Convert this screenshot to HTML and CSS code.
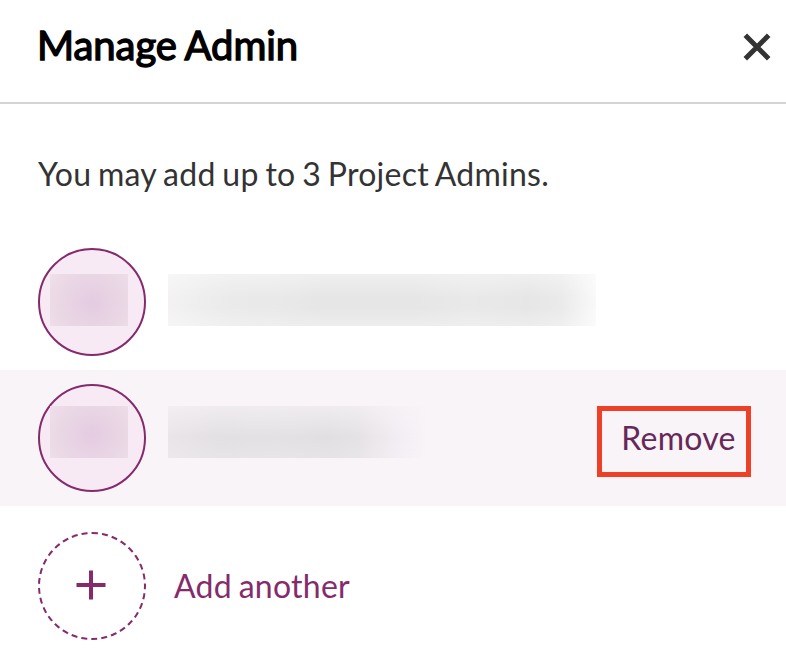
FILE: index.html
```html
<!DOCTYPE html>
<html lang="en">
<head>
<meta charset="utf-8">
<title>Manage Admin</title>
<link rel="stylesheet" href="styles.css">
</head>
<body>
<main class="dialog">
  <header class="header">
    <h1 class="title">Manage Admin</h1>
    <button class="close" aria-label="Close">
      <svg width="28" height="28" viewBox="0 0 28 28"><path d="M2.3 2.3 25.7 25.7M25.7 2.3 2.3 25.7"/></svg>
    </button>
  </header>
  <p class="intro">You may add up to 3 Project Admins.</p>
  <ul class="list">
    <li class="row">
      <span class="avatar"><span class="initials"></span></span>
      <span class="name name-long"></span>
    </li>
    <li class="row row-active">
      <span class="avatar"><span class="initials initials-high"></span></span>
      <span class="name name-short"></span>
      <button class="remove">Remove</button>
    </li>
    <li class="row row-add">
      <span class="avatar avatar-add">
        <svg width="30" height="30" viewBox="0 0 30 30"><path d="M.5 15h29M15 .5v29"/></svg>
      </span>
      <button class="add">Add another</button>
    </li>
  </ul>
</main>
</body>
</html>
```

FILE: styles.css
```css
* { box-sizing: border-box; }
body {
  margin: 0;
  background: #fff;
  color: #333;
  font: 32px/40px Lato, sans-serif;
  letter-spacing: .26px;
  word-spacing: -1.7px;
}
button {
  padding: 0;
  border: 0;
  background: none;
  font: inherit;
  letter-spacing: inherit;
  word-spacing: inherit;
}
svg { display: block; fill: none; }
.dialog { height: 664px; overflow: hidden; }
.header {
  display: flex;
  justify-content: space-between;
  height: 104px;
  padding: 21px 15px 0 37px;
  border-bottom: 2px solid #d4d4d4;
}
.title {
  margin: 0;
  color: #000;
  font-size: 40px;
  font-weight: 400;
  line-height: 48px;
  letter-spacing: -.05px;
  word-spacing: -1.3px;
  -webkit-text-stroke: 1.4px #000;
}
.close { height: 28px; margin-top: 12px; }
.close path { stroke: #333; stroke-width: 5; }
.intro { margin: 50px 38px 40px; white-space: nowrap; }
.list { margin: 0; padding: 0; list-style: none; }
.row {
  display: flex;
  align-items: center;
  height: 136px;
  padding: 0 35px 0 38px;
}
.row-active { background: #f8f4f8; }
.row-add { height: 160px; }
.avatar {
  display: flex;
  flex: none;
  align-items: center;
  justify-content: center;
  width: 108px;
  height: 108px;
  border: 2px solid #852b6b;
  border-radius: 50%;
  background: #f7eaf4;
}
.initials {
  width: 78px;
  height: 52px;
  margin: 0 6px 4px 0;
  background: radial-gradient(ellipse 52px 50px at 54% 55%, #e4cbe1, #ead8e5 65%, #efe0eb);
}
.initials-high { margin-bottom: 12px; }
.name { height: 52px; margin-left: 22px; }
.name-long {
  width: 428px;
  margin-bottom: 4px;
  background:
    linear-gradient(to bottom, rgba(255,255,255,.4), rgba(255,255,255,.05) 45%, rgba(255,255,255,.05) 65%, rgba(255,255,255,.3)),
    linear-gradient(to right, #f3f1f2, #e9e9e9 15%, #e8e8e8 25%, #e5e5e5 35%, #e5e5e5 58%, #e8e8e8 71%, #e5e5e5 84%, #e9e9e9 92%, #f9f9f9);
}
.name-short {
  width: 260px;
  margin-bottom: 12px;
  background:
    linear-gradient(to bottom, rgba(248,244,248,.6), rgba(248,244,248,0) 60%, rgba(248,244,248,.2)),
    linear-gradient(to right, #e9e5e9, #e3e0e3 20%, #e4e1e4 42%, #e2dfe2 62%, #e5e2e5 73%, #f1ecf1 87%, #f8f4f8);
}
.remove {
  width: 154px;
  height: 71px;
  margin: 7px 0 0 auto;
  padding: 0 0 7px 9px;
  border: 5px solid #ed4027;
  color: #662858;
}
.avatar-add { border-style: dashed; background: none; }
.avatar-add svg { margin: 0 2px 2px 0; }
.avatar-add path { stroke: #852b6b; stroke-width: 4; }
.add { margin-left: 28px; color: #852b6b; }
```
